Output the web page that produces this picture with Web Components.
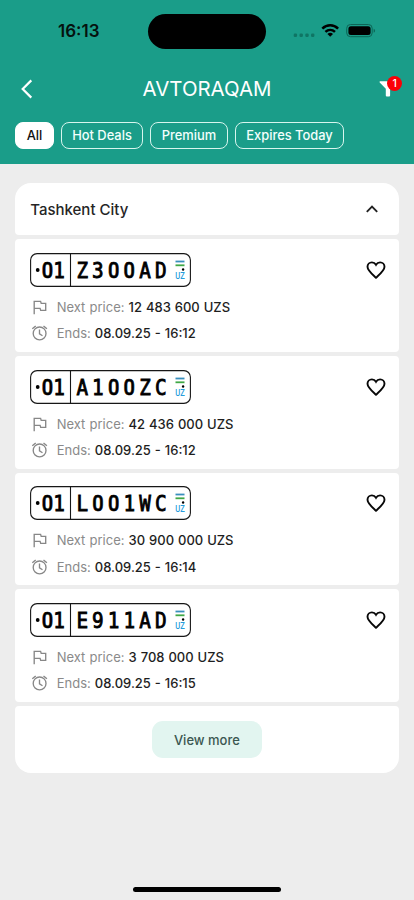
<!DOCTYPE html>
<html lang="en">
<head>
<meta charset="utf-8">
<title>Avtoraqam</title>
<style>
html,body{margin:0;height:900px;overflow:hidden;background:#ededed;font-family:Inter,"Liberation Sans",sans-serif}
</style>
</head>
<body>
<auction-app></auction-app>
<script>
const define = (name, html, setup) => {
  const tpl = document.createElement('template');
  tpl.innerHTML = html;
  customElements.define(name, class extends HTMLElement {
    connectedCallback() {
      if (this.shadowRoot) return;
      const root = this.attachShadow({ mode: 'open' });
      root.append(tpl.content.cloneNode(true));
      if (setup) setup(this, root);
    }
  });
};

define('status-bar', `
<style>
:host{display:grid;grid-template-columns:148px 118px 148px;height:62px;align-items:center;color:#05120f}
.time{font-size:17px;font-weight:600;padding-left:58px;letter-spacing:0;line-height:20px}
.island{height:35px;border-radius:18px;background:#000}
svg{display:block}
</style>
<div class="time">16:13</div><div class="island"></div>
<svg width="148" height="62" viewBox="266 0 148 62">
  <g fill="#0f7564"><rect x="293.7" y="33.5" width="3.4" height="3.4" rx="1.2"/><rect x="299.5" y="33.5" width="3.4" height="3.4" rx="1.2"/><rect x="305.3" y="33.5" width="3.4" height="3.4" rx="1.2"/><rect x="311" y="33.5" width="3.4" height="3.4" rx="1.2"/></g>
  <g fill="none" stroke="#000" stroke-width="2.5"><path d="M322.3 28.6c4.5-4.4 11.3-4.4 15.8 0"/><path d="M325.4 31.9c2.8-2.6 6.8-2.6 9.6 0"/></g>
  <path d="M327.4 33.9c1.6-1.4 4-1.4 5.6 0L330.2 36.8z" fill="#000"/>
  <rect x="346.7" y="24.5" width="25.5" height="12.2" rx="3.8" fill="none" stroke="#0d6556"/>
  <rect x="348.4" y="26.2" width="22.2" height="8.8" rx="2.5"/>
  <path d="M373.7 28.7c1.8.7 1.8 3.2 0 4z" fill="#0d6556"/>
</svg>`);

define('nav-bar', `
<style>
:host{display:grid;grid-template-columns:60px 1fr 60px;align-items:center;height:54px;color:#fff}
h1{margin:0;text-align:center;font-size:20.4px;font-weight:400;line-height:26px}
svg{display:block}
.filter{position:relative;height:54px}
.badge{position:absolute;left:33.3px;top:13.5px;width:15px;height:15px;border-radius:50%;background:#fb0007;font:500 10.5px/15px Inter,sans-serif;text-align:center}
</style>
<svg width="60" height="54"><path d="M31.3 18.4L22.7 27l8.6 8.6" fill="none" stroke="#fff" stroke-width="2.2"/></svg>
<h1><slot></slot></h1>
<div class="filter"><svg width="60" height="54"><path d="M26 19.2h15.5l-5.4 7.5v6.8q0 1-1 1h-2.3q-1 0-1-1v-6.8L25.7 20.5q-.5-1 .3-1.3z" fill="#fff"/></svg><span class="badge">1</span></div>`);

define('filter-chip', `
<style>
:host{display:flex;box-sizing:border-box;height:27px;align-items:center;justify-content:center;border:1px solid #d7f5ee;border-radius:8px;font-size:12.9px;font-weight:500;color:#f2fffc;white-space:nowrap}
:host([selected]){background:#fff;border-color:#fff;color:#111}
</style><slot></slot>`);

define('plate-number', `
<style>
:host{display:block;width:161px;height:34px}
svg{display:block}
.region,.serial{font-family:"DejaVu Sans Mono",monospace;font-weight:400;font-size:21px;text-anchor:middle;stroke:#000;stroke-width:.85}
.zero{font-family:Roboto,sans-serif;font-size:21.8px;font-weight:500;stroke-width:.6}
.uz{font:500 9px Roboto,sans-serif;fill:#269cdc;text-anchor:middle}
</style>
<svg width="161" height="34" viewBox="0 0 161 34">
  <rect x=".6" y=".6" width="159.8" height="32.8" rx="6.5" fill="#fff" stroke="#171717" stroke-width="1.1"/>
  <path d="M40.5.5v33" stroke="#171717" stroke-width="1.1"/>
  <circle cx="7.7" cy="17" r="1.9"/>
  <text class="region" y="24.8" transform="scale(.92 1)"></text>
  <text class="serial" y="24.8" transform="scale(.92 1)"></text>
  <path d="M145.5 8.5h9" stroke="#398fbd" stroke-width="1.8"/>
  <path d="M145.5 12.3h9" stroke="#40a846" stroke-width="1.8"/>
  <circle cx="153.1" cy="16.5" r="1.2"/>
  <text class="uz" transform="translate(150 26.2) scale(.84 1)">UZ</text>
</svg>`, (host, root) => {
  const fill = (el, str, start, pitch) => [...str].forEach((ch, i) => {
    const t = document.createElementNS('http://www.w3.org/2000/svg', 'tspan');
    t.setAttribute('x', (start + i * pitch) / .92);
    if (ch === '0') t.setAttribute('class', 'zero');
    t.textContent = ch;
    el.append(t);
  });
  const [region, serial] = host.getAttribute('value').split(' ');
  fill(root.querySelector('.region'), region, 17.5, 11.6);
  fill(root.querySelector('.serial'), serial, 52.2, 15.7);
});

define('info-row', `
<style>
:host{display:grid;grid-template-columns:26.5px 1fr;align-items:center;height:20px;font-size:13px;line-height:20px;color:#8a8a8a;white-space:nowrap}
svg{display:block}
b{font-weight:500;color:#1e1e1e;word-spacing:.5px}
.label{word-spacing:.5px;padding-right:.4px}
svg{fill:none;stroke:#878787;stroke-width:1.35}
:host([icon=flag]) .clock,:host([icon=clock]) .flag{display:none}
</style>
<svg class="flag" width="20" height="20"><path d="M4.2 17.2V4.4h6.4l.6 2h4.5v7h-5l-.6-2H4.2"/></svg>
<svg class="clock" width="20" height="20"><circle cx="9.6" cy="10.4" r="6.4"/><path d="M9.5 6.4v4.4l3 2M2.3 5.8l3.4-2.9M13.5 2.9l3.4 2.9"/></svg>
<div><span class="label"></span> <b><slot></slot></b></div>`, (host, root) => {
  root.querySelector('.label').textContent = host.getAttribute('label');
});

define('auction-item', `
<style>
:host{display:grid;grid-template-columns:161px 1fr 22px;box-sizing:border-box;height:112.67px;padding:13.5px 12px 0 15px;background:#fff;border-radius:4px;align-content:start}
.rows{grid-column:1/-1;display:grid;gap:6.4px;padding-top:10px}
svg{grid-column:3;align-self:center;display:block}
</style>
<svg width="22" height="22" viewBox="0 0 22 22"><path d="M11 18.8l-1.2-1.1C5.4 13.7 2.5 11.1 2.5 7.8c0-2.5 1.9-4.4 4.4-4.4 1.7 0 3.2.9 4.1 2.4.9-1.5 2.4-2.4 4.1-2.4 2.5 0 4.4 1.9 4.4 4.4 0 3.3-2.9 5.9-7.3 9.9z" fill="none" stroke="#080808" stroke-width="1.9"/></svg>
<div class="rows"><info-row icon="flag" label="Next price:"><slot name="price"></slot></info-row><info-row icon="clock" label="Ends:"><slot name="end"></slot></info-row></div>`, (host, root) => {
  const plate = document.createElement('plate-number');
  plate.setAttribute('value', host.getAttribute('plate'));
  root.querySelector('svg').before(plate);
});

define('group-header', `
<style>
:host{display:flex;box-sizing:border-box;height:52.5px;padding:0 20px 0 15px;align-items:center;justify-content:space-between;background:#fff;border-radius:16px 16px 4px 4px;font-size:15px;font-weight:500;color:#252525}
</style><slot></slot>
<svg width="14" height="14"><path d="M1.8 9.9L7 4.7l5.2 5.2" fill="none" stroke="#222" stroke-width="1.9"/></svg>`);

define('view-more', `
<style>
:host{display:flex;height:67.3px;align-items:center;justify-content:center;background:#fff;border-radius:4px 4px 16px 16px}
button{width:110px;height:37.5px;border:0;border-radius:11px;background:#e2f5f0;color:#3b5750;font:500 13px Inter,sans-serif;padding:0}
</style><button><slot></slot></button>`);

define('auction-app', `
<style>
:host{display:flex;flex-direction:column;width:414px;height:900px;background:#ededed}
header{height:164px;background:#1a9d89}
.chips{display:grid;grid-template-columns:39px 82px 78px 109px;gap:7px;padding:6.3px 15px 0}
main{display:flex;flex-direction:column;gap:4px;padding:18.9px 15.4px 0 15.2px;flex:1}
footer{height:14px;display:flex;justify-content:center;padding-top:0}
footer i{width:148px;height:5px;border-radius:3px;background:#000;margin-top:1px}
</style>
<header><status-bar></status-bar><nav-bar>AVTORAQAM</nav-bar>
<div class="chips"><filter-chip selected>All</filter-chip><filter-chip>Hot Deals</filter-chip><filter-chip>Premium</filter-chip><filter-chip>Expires Today</filter-chip></div></header>
<main><group-header>Tashkent City</group-header>
<auction-item plate="01 Z300AD"><span slot="price">12 483 600 UZS</span><span slot="end">08.09.25 - 16:12</span></auction-item>
<auction-item plate="01 A100ZC"><span slot="price">42 436 000 UZS</span><span slot="end">08.09.25 - 16:12</span></auction-item>
<auction-item plate="01 L001WC"><span slot="price">30 900 000 UZS</span><span slot="end">08.09.25 - 16:14</span></auction-item>
<auction-item plate="01 E911AD"><span slot="price">3 708 000 UZS</span><span slot="end">08.09.25 - 16:15</span></auction-item>
<view-more>View more</view-more></main>
<footer><i></i></footer>`);
</script>
</body>
</html>
